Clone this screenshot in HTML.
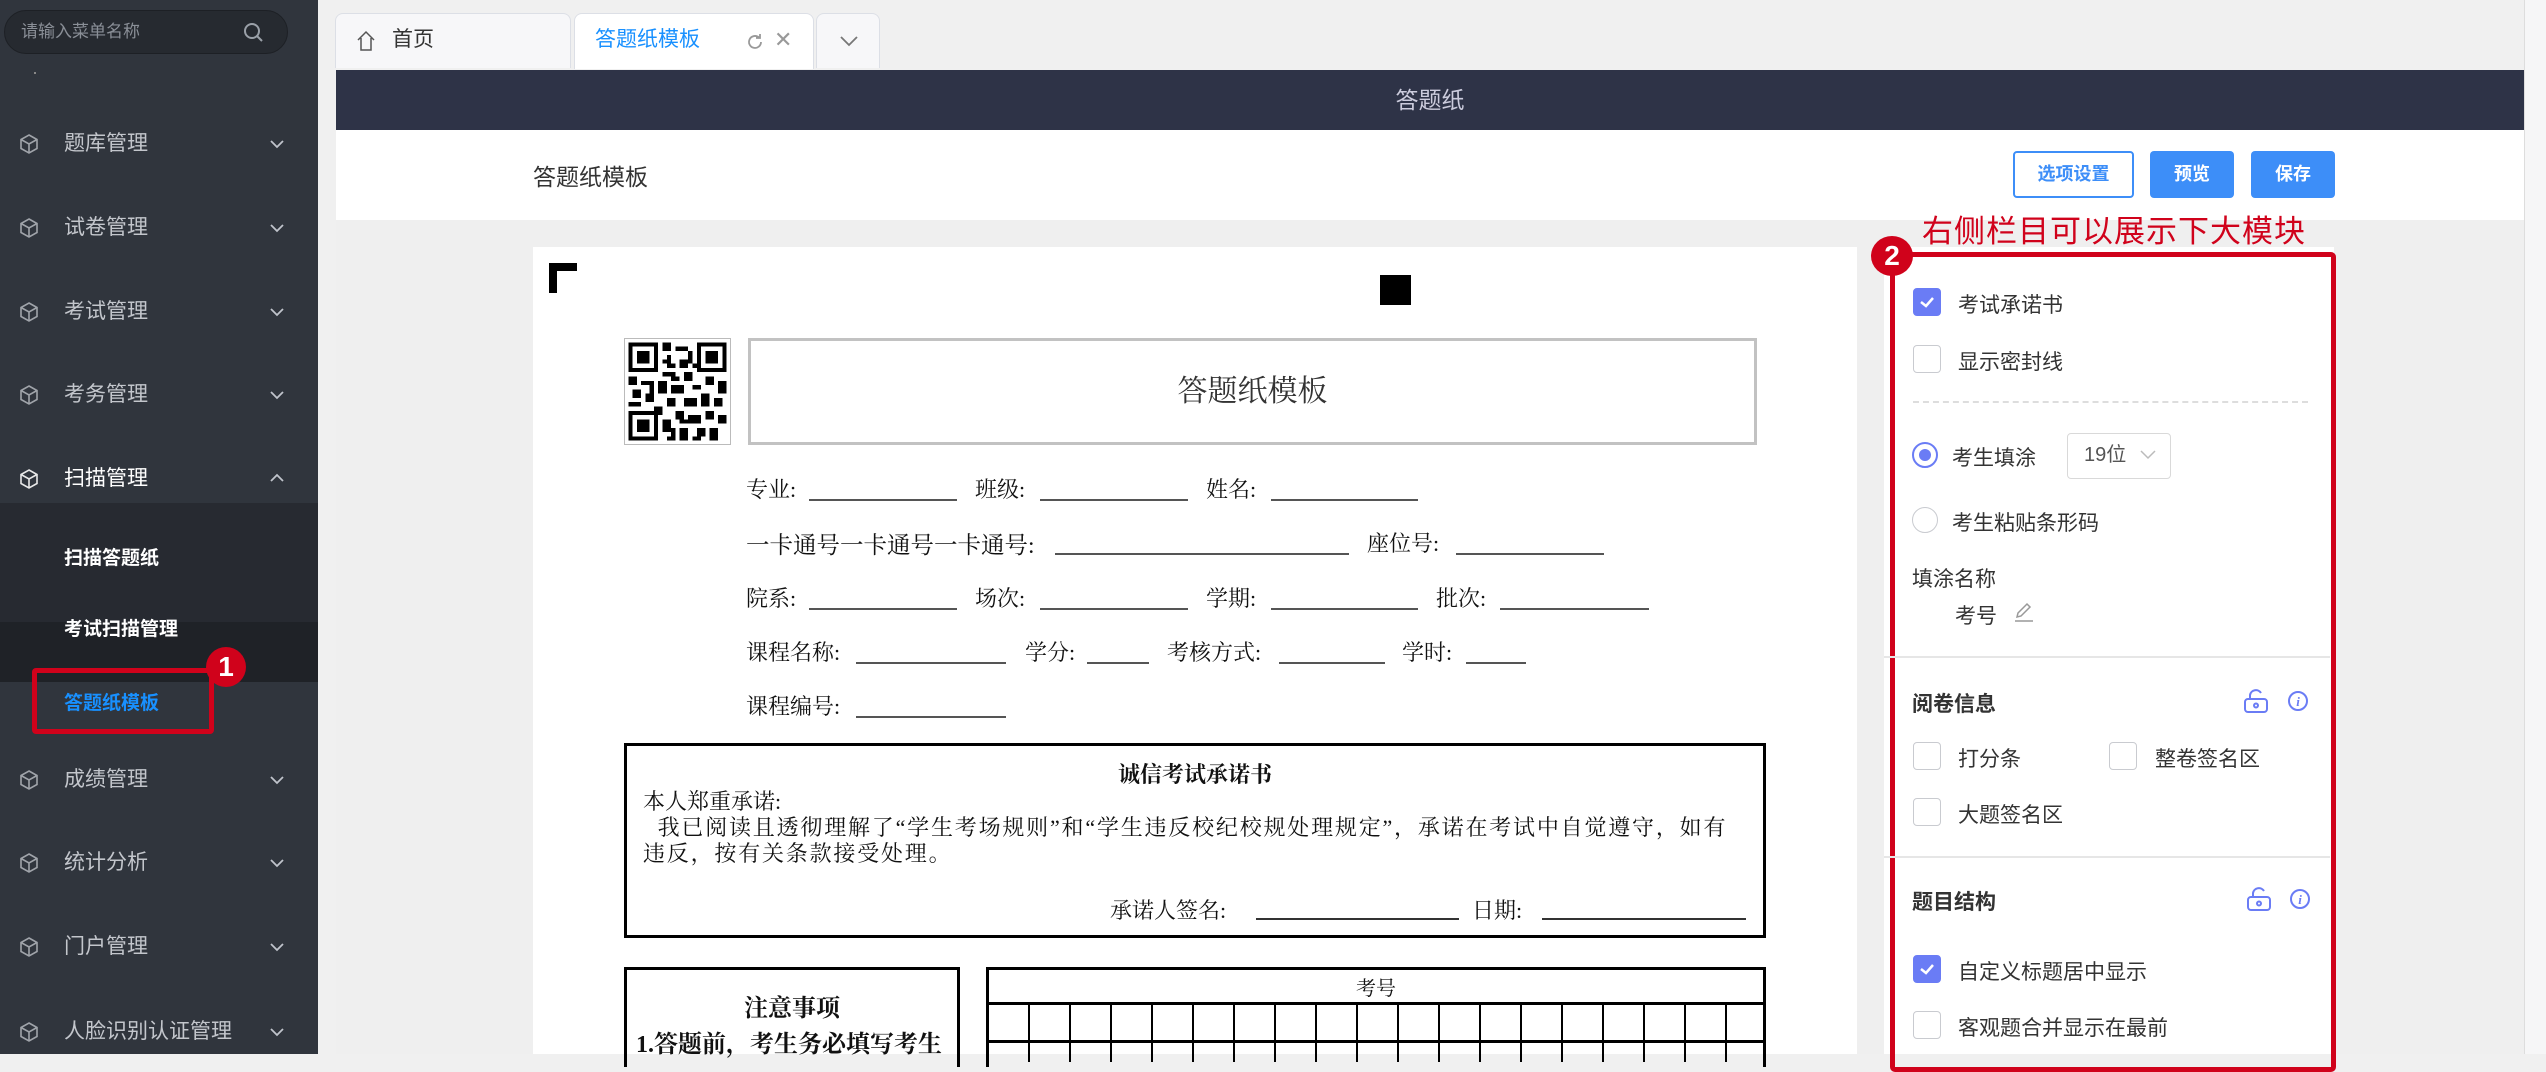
<!DOCTYPE html>
<html><head><meta charset="utf-8"><style>
*{margin:0;padding:0;box-sizing:border-box}
body{width:2546px;height:1054px;overflow:hidden;background:#f0f0f0;font-family:"Liberation Sans","Noto Sans CJK SC",sans-serif;position:relative}
.abs{position:absolute}
#side{left:0;top:0;width:318px;height:1054px;background:#30353d}
.search{left:4px;top:10px;width:284px;height:44px;border-radius:22px;background:#262a30;border:1px solid #1d2025;color:#8a8f97;font-size:17px;line-height:42px;padding-left:16px}
.mi{left:0;width:318px;height:60px;color:#c3c6cc;font-size:21px;line-height:60px}
.mi .t{position:absolute;left:64px}
.mi svg.ic{position:absolute;left:18px;top:19px}
.mi svg.ch{position:absolute;left:268px;top:22px}
.sub{left:0;top:503px;width:318px;height:179px;background:#272a31}
.si{left:64px;color:#fff;font-weight:bold;font-size:19px}
#tabs .tab{position:absolute;top:13px;height:55px;border:1px solid #dcdfe6;border-bottom:none;border-radius:8px 8px 0 0;background:#f7f7f9;font-size:21px;line-height:52px}
.pt{font-family:"Liberation Serif","Noto Serif CJK SC",serif;color:#111;font-size:22px}
.cb{position:absolute;width:28px;height:28px;border:1.5px solid #c9cbd0;border-radius:4px;background:#fff}
.cb.on{background:#6a7cf5;border-color:#6a7cf5}
.lbl{position:absolute;font-size:21px;color:#333}
</style></head><body>
<div id="side" class="abs">
 <div class="abs search">请输入菜单名称<svg class="abs" style="left:238px;top:11px" width="22" height="22" viewBox="0 0 22 22"><circle cx="9" cy="9" r="7" fill="none" stroke="#9aa0a8" stroke-width="2"/><path d="M14 14l5 5" stroke="#9aa0a8" stroke-width="2"/></svg></div>
 <div class="abs" style="left:34px;top:72px;width:2px;height:2px;background:#888"></div>
</div>
<div class="abs sub"></div>
<div class="abs" style="left:0;top:622px;width:318px;height:60px;background:#1f2227"></div>

<div id="menu"></div>
<script>
var items=[["题库管理",144],["试卷管理",228],["考试管理",312],["考务管理",395],["扫描管理",479,1],["成绩管理",780],["统计分析",863],["门户管理",947],["人脸识别认证管理",1032]];
var h='';
items.forEach(function(it){
 var cube='<svg class="ic" width="22" height="22" viewBox="0 0 22 22" fill="none" stroke="'+(it[2]?'#e8e8e8':'#a0a4aa')+'" stroke-width="1.6"><path d="M11 2l8 4.5v9L11 20l-8-4.5v-9z"/><path d="M3 6.5L11 11l8-4.5M11 11v9"/></svg>';
 var ch=it[2]?'<path d="M3 10l6-6 6 6"/>':'<path d="M3 5l6 6 6-6"/>';
 h+='<div class="abs mi" style="top:'+(it[1]-30)+'px;'+(it[2]?'color:#fff;':'')+'">'+cube+'<span class="t">'+it[0]+'</span><svg class="ch" width="18" height="16" viewBox="0 0 18 16" fill="none" stroke="#c0c4cc" stroke-width="1.8">'+ch+'</svg></div>';
});
document.getElementById('menu').innerHTML=h;
</script>
<div class="abs si" style="top:543px">扫描答题纸</div>
<div class="abs si" style="top:614px">考试扫描管理</div>
<div class="abs si" style="top:688px;color:#1890ff;font-weight:bold">答题纸模板</div>
<div class="abs" style="left:32px;top:668px;width:182px;height:66px;border:5px solid #d0021b;border-radius:4px"></div>
<div class="abs" style="left:206px;top:647px;width:40px;height:40px;border-radius:50%;background:#d0021b;color:#fff;font-weight:bold;font-size:28px;text-align:center;line-height:40px">1</div>

<div id="tabs">
 <div class="tab" style="left:335px;width:236px"><svg class="abs" style="left:20px;top:16px" width="20" height="22" viewBox="0 0 20 22" fill="none" stroke="#555" stroke-width="1.5"><path d="M2 10L10 2l8 8M5 8v12h10V8"/></svg><span class="abs" style="left:56px;color:#333">首页</span></div>
 <div class="tab" style="left:574px;width:240px;background:#fff;height:56px"><span class="abs" style="left:20px;color:#1890ff">答题纸模板</span><svg class="abs" style="left:170px;top:18px" width="20" height="20" viewBox="0 0 20 20" fill="none" stroke="#999" stroke-width="1.8"><path d="M16 10a6 6 0 1 1-2-4.5M15 2v4h-4"/></svg><span class="abs" style="left:199px;color:#999;font-size:22px">✕</span></div>
 <div class="tab" style="left:816px;width:64px"><svg class="abs" style="left:22px;top:20px" width="20" height="14" viewBox="0 0 20 14" fill="none" stroke="#777" stroke-width="1.8"><path d="M2 3l8 8 8-8"/></svg></div>
</div>
<div class="abs" style="left:2524px;top:0;width:22px;height:1054px;background:#f6f6f7;border-left:1px solid #ddd"></div>
<div class="abs" style="left:336px;top:70px;width:2188px;height:984px;background:#efefef"></div>
<div class="abs" style="left:336px;top:70px;width:2188px;height:60px;background:#2e3347;color:#ccd;font-size:23px;text-align:center;line-height:60px">答题纸</div>
<div class="abs" style="left:336px;top:130px;width:2188px;height:90px;background:#fff"></div>
<div class="abs" style="left:533px;top:158px;font-size:23px;color:#333">答题纸模板</div>
<div class="abs" style="left:2013px;top:151px;width:121px;height:47px;border:2px solid #3d8ef8;border-radius:4px;color:#3d8ef8;font-size:18px;font-weight:bold;text-align:center;line-height:43px">选项设置</div>
<div class="abs" style="left:2150px;top:151px;width:84px;height:47px;background:#3d8ef8;border-radius:4px;color:#fff;font-size:18px;font-weight:bold;text-align:center;line-height:47px">预览</div>
<div class="abs" style="left:2251px;top:151px;width:84px;height:47px;background:#3d8ef8;border-radius:4px;color:#fff;font-size:18px;font-weight:bold;text-align:center;line-height:47px">保存</div>

<!-- paper -->
<div class="abs" style="left:533px;top:247px;width:1324px;height:807px;background:#fff"></div>
<div class="abs" style="left:549px;top:263px;width:28px;height:8px;background:#000"></div>
<div class="abs" style="left:549px;top:263px;width:8px;height:30px;background:#000"></div>
<div class="abs" style="left:1380px;top:275px;width:31px;height:30px;background:#000"></div>
<svg class="abs" style="left:624px;top:338px" width="107" height="107" viewBox="0 0 25 25" shape-rendering="crispEdges">
<rect width="25" height="25" fill="#fff" stroke="#bbb" stroke-width=".5"/>
<g fill="#000"><rect x="1" y="1" width="7" height="7"/><rect x="17" y="1" width="7" height="7"/><rect x="1" y="17" width="7" height="7"/></g>
<g fill="#fff"><rect x="2" y="2" width="5" height="5"/><rect x="18" y="2" width="5" height="5"/><rect x="2" y="18" width="5" height="5"/></g>
<g fill="#000"><rect x="3" y="3" width="3" height="3"/><rect x="19" y="3" width="3" height="3"/><rect x="3" y="19" width="3" height="3"/>
<path d="M9 1h2v2H9zM12 2h3v1h-3zM10 4h1v3h-1zM13 5h2v2h-2zM9 8h3v1H9zM14 8h2v2h-2zM1 9h2v2H1zM4 10h3v1H4zM8 10h2v3H8zM11 11h3v2h-3zM16 11h2v1h-2zM19 9h2v2h-2zM22 10h2v3h-2zM2 12h2v2H2zM5 13h2v2H5zM10 14h2v2h-2zM14 14h3v2h-3zM18 13h2v3h-2zM21 14h2v2h-2zM1 15h3v1H1zM7 16h2v2H7zM12 17h2v2h-2zM9 19h2v3H9zM15 18h3v2h-3zM19 17h2v2h-2zM22 18h2v2h-2zM13 21h2v3h-2zM17 21h2v2h-2zM20 21h2v3h-2zM10 23h2v1h-2zM16 23h2v1h-2zM15 3h1v3h-1zM11 6h1v1h-1zM9 5h1v1H9zM16 6h1v1h-1zM11 9h2v1h-2zM6 11h1v2H6zM13 19h2v1h-2zM11 21h1v2h-1z"/></g>
</svg>
<div class="abs" style="left:748px;top:338px;width:1009px;height:107px;border:3px solid #c2c2c2;font-family:'Liberation Serif','Noto Serif CJK SC',serif;font-size:30px;color:#333;text-align:center;line-height:101px">答题纸模板</div>

<div class="abs pt" style="left:746px;top:473px">专业:</div><div class="abs" style="left:809px;top:499px;width:148px;border-top:2px solid #555"></div>
<div class="abs pt" style="left:975px;top:473px">班级:</div><div class="abs" style="left:1040px;top:499px;width:148px;border-top:2px solid #555"></div>
<div class="abs pt" style="left:1206px;top:473px">姓名:</div><div class="abs" style="left:1271px;top:499px;width:147px;border-top:2px solid #555"></div>

<div class="abs pt" style="left:746px;top:526px;font-size:23.5px">一卡通号一卡通号一卡通号:</div><div class="abs" style="left:1055px;top:553px;width:294px;border-top:2px solid #555"></div>
<div class="abs pt" style="left:1367px;top:527px">座位号:</div><div class="abs" style="left:1456px;top:553px;width:148px;border-top:2px solid #555"></div>

<div class="abs pt" style="left:746px;top:582px">院系:</div><div class="abs" style="left:809px;top:608px;width:148px;border-top:2px solid #555"></div>
<div class="abs pt" style="left:975px;top:582px">场次:</div><div class="abs" style="left:1040px;top:608px;width:148px;border-top:2px solid #555"></div>
<div class="abs pt" style="left:1206px;top:582px">学期:</div><div class="abs" style="left:1271px;top:608px;width:147px;border-top:2px solid #555"></div>
<div class="abs pt" style="left:1436px;top:582px">批次:</div><div class="abs" style="left:1500px;top:608px;width:149px;border-top:2px solid #555"></div>

<div class="abs pt" style="left:746px;top:636px">课程名称:</div><div class="abs" style="left:856px;top:662px;width:150px;border-top:2px solid #555"></div>
<div class="abs pt" style="left:1025px;top:636px">学分:</div><div class="abs" style="left:1087px;top:662px;width:62px;border-top:2px solid #555"></div>
<div class="abs pt" style="left:1167px;top:636px">考核方式:</div><div class="abs" style="left:1279px;top:662px;width:106px;border-top:2px solid #555"></div>
<div class="abs pt" style="left:1402px;top:636px">学时:</div><div class="abs" style="left:1466px;top:662px;width:60px;border-top:2px solid #555"></div>

<div class="abs pt" style="left:746px;top:690px">课程编号:</div><div class="abs" style="left:856px;top:716px;width:150px;border-top:2px solid #555"></div>

<div class="abs" style="left:624px;top:743px;width:1142px;height:195px;border:3px solid #000"></div>
<div class="abs pt" style="left:624px;top:758px;width:1142px;text-align:center;font-weight:bold">诚信考试承诺书</div>
<div class="abs pt" style="left:643px;top:789px;width:1120px;line-height:26px;font-size:22px;white-space:nowrap">本人郑重承诺:<br><span style="letter-spacing:1.8px">&nbsp;&nbsp;我已阅读且透彻理解了“学生考场规则”和“学生违反校纪校规处理规定”，承诺在考试中自觉遵守，如有</span><br><span style="letter-spacing:1.8px">违反，按有关条款接受处理。</span></div>
<div class="abs pt" style="left:1110px;top:894px">承诺人签名:</div><div class="abs" style="left:1256px;top:918px;width:203px;border-top:2px solid #333"></div>
<div class="abs pt" style="left:1472px;top:894px">日期:</div><div class="abs" style="left:1542px;top:918px;width:204px;border-top:2px solid #333"></div>

<div class="abs" style="left:624px;top:967px;width:336px;height:100px;border:3px solid #000;border-bottom:none"></div>
<div class="abs pt" style="left:624px;top:988px;width:336px;text-align:center;font-weight:bold;font-size:24px">注意事项</div>
<div class="abs pt" style="left:636px;top:1024px;font-weight:bold;font-size:24px">1.答题前，考生务必填写考生</div>
<div class="abs" style="left:986px;top:967px;width:780px;height:100px;border:3px solid #000;border-bottom:none"></div>
<div class="abs pt" style="left:986px;top:972px;width:780px;text-align:center;font-size:20px">考号</div>
<div class="abs" style="left:989px;top:1002px;width:774px;height:60px;border-top:3px solid #000;background:repeating-linear-gradient(90deg,transparent 0 39px,#000 39px 41px),repeating-linear-gradient(180deg,transparent 0 35px,#000 35px 38px)"></div>

<!-- right panel -->
<div class="abs" style="left:1884px;top:247px;width:450px;height:807px;background:#fff"></div>
<div class="abs" style="left:1922px;top:206px;color:#d0021b;font-size:31px;letter-spacing:1px">右侧栏目可以展示下大模块</div>
<div class="abs" style="left:1890px;top:252px;width:446px;height:820px;border:5px solid #d0021b;border-radius:5px"></div>
<div class="abs" style="left:1871px;top:236px;width:42px;height:40px;border-radius:50%;background:#d0021b;color:#fff;font-weight:bold;font-size:28px;text-align:center;line-height:40px">2</div>

<div class="cb on" style="left:1913px;top:288px"></div><svg class="abs" style="left:1917px;top:292px" width="20" height="20"><path d="M4 10l5 4 7-8" fill="none" stroke="#fff" stroke-width="2.5"/></svg>
<div class="lbl" style="left:1958px;top:289px">考试承诺书</div>
<div class="cb" style="left:1913px;top:345px"></div><div class="lbl" style="left:1958px;top:346px">显示密封线</div>
<div class="abs" style="left:1913px;top:401px;width:395px;border-top:2px dashed #ddd"></div>
<div class="abs" style="left:1912px;top:442px;width:26px;height:26px;border-radius:50%;border:2px solid #6a7cf5"></div>
<div class="abs" style="left:1919px;top:449px;width:12px;height:12px;border-radius:50%;background:#6a7cf5"></div>
<div class="lbl" style="left:1952px;top:442px">考生填涂</div>
<div class="abs" style="left:2067px;top:433px;width:104px;height:46px;border:1.5px solid #d9d9d9;border-radius:4px;font-size:20px;color:#555;line-height:43px;padding-left:16px">19位<svg class="abs" style="left:72px;top:16px" width="16" height="10"><path d="M1 1l7 7 7-7" fill="none" stroke="#bbb" stroke-width="1.5"/></svg></div>
<div class="abs" style="left:1912px;top:507px;width:26px;height:26px;border-radius:50%;border:1.5px solid #c9cbd0"></div>
<div class="lbl" style="left:1952px;top:507px">考生粘贴条形码</div>
<div class="lbl" style="left:1912px;top:563px">填涂名称</div>
<div class="lbl" style="left:1955px;top:600px">考号</div>
<svg class="abs" style="left:2012px;top:600px" width="24" height="24" viewBox="0 0 24 24" fill="none" stroke="#999" stroke-width="1.5"><path d="M5 17l1-4 9-9 3 3-9 9zM3 21h18"/></svg>
<div class="abs" style="left:1884px;top:656px;width:446px;border-top:2px solid #e6e6e6"></div>
<div class="lbl" style="left:1912px;top:688px;font-weight:bold">阅卷信息</div>
<svg class="abs" style="left:2243px;top:688px" width="26" height="26" viewBox="0 0 26 26" fill="none" stroke="#6a7cf5" stroke-width="2"><rect x="2" y="11" width="22" height="13" rx="3"/><path d="M7 11V7a6 6 0 0 1 11-2"/><circle cx="13" cy="17.5" r="2"/></svg>
<svg class="abs" style="left:2287px;top:690px" width="22" height="22" viewBox="0 0 22 22"><circle cx="11" cy="11" r="9" fill="none" stroke="#6a7cf5" stroke-width="2"/><text x="11" y="16" font-size="13" font-style="italic" font-weight="bold" fill="#6a7cf5" text-anchor="middle" font-family="Liberation Serif">i</text></svg>
<div class="cb" style="left:1913px;top:742px"></div><div class="lbl" style="left:1958px;top:743px">打分条</div>
<div class="cb" style="left:2109px;top:742px"></div><div class="lbl" style="left:2155px;top:743px">整卷签名区</div>
<div class="cb" style="left:1913px;top:798px"></div><div class="lbl" style="left:1958px;top:799px">大题签名区</div>
<div class="abs" style="left:1884px;top:856px;width:446px;border-top:2px solid #e6e6e6"></div>
<div class="lbl" style="left:1912px;top:886px;font-weight:bold">题目结构</div>
<svg class="abs" style="left:2246px;top:886px" width="26" height="26" viewBox="0 0 26 26" fill="none" stroke="#6a7cf5" stroke-width="2"><rect x="2" y="11" width="22" height="13" rx="3"/><path d="M7 11V7a6 6 0 0 1 11-2"/><circle cx="13" cy="17.5" r="2"/></svg>
<div class="abs" style="left:2289px;top:888px"><svg width="22" height="22" viewBox="0 0 22 22"><circle cx="11" cy="11" r="9" fill="none" stroke="#6a7cf5" stroke-width="2"/><text x="11" y="16" font-size="13" font-style="italic" font-weight="bold" fill="#6a7cf5" text-anchor="middle" font-family="Liberation Serif">i</text></svg></div>
<div class="cb on" style="left:1913px;top:955px"></div><svg class="abs" style="left:1917px;top:959px" width="20" height="20"><path d="M4 10l5 4 7-8" fill="none" stroke="#fff" stroke-width="2.5"/></svg>
<div class="lbl" style="left:1958px;top:956px">自定义标题居中显示</div>
<div class="cb" style="left:1913px;top:1011px"></div><div class="lbl" style="left:1958px;top:1012px">客观题合并显示在最前</div>
</body></html>
